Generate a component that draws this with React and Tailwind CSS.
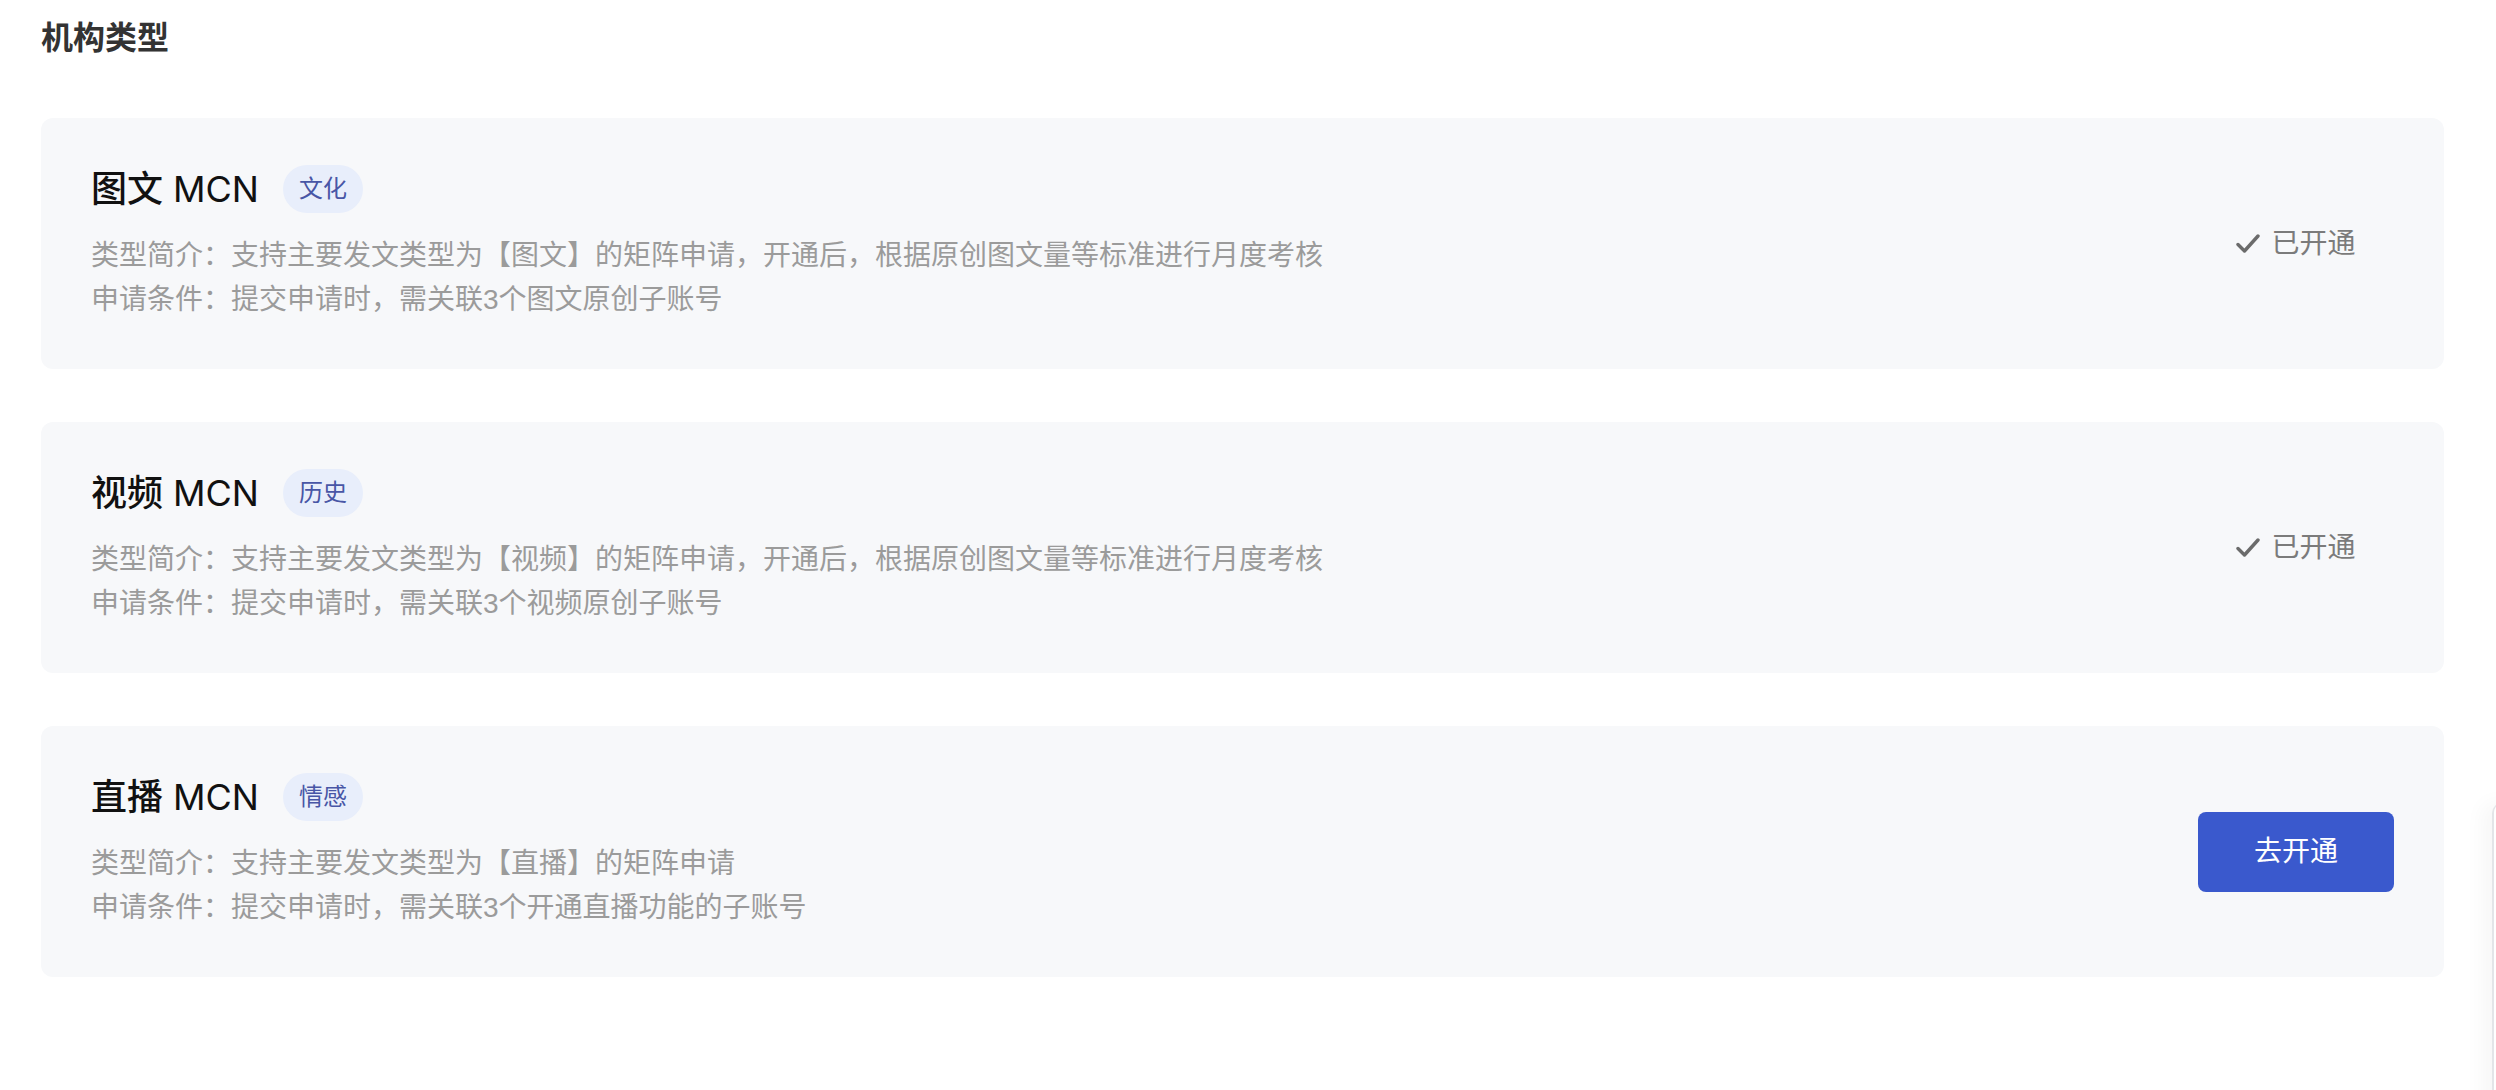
import React from 'react';

const types = [
  {
    id: 'article',
    name: '图文',
    tag: '文化',
    intro: '类型简介：支持主要发文类型为【图文】的矩阵申请，开通后，根据原创图文量等标准进行月度考核',
    cond: '申请条件：提交申请时，需关联3个图文原创子账号',
    opened: true,
  },
  {
    id: 'video',
    name: '视频',
    tag: '历史',
    intro: '类型简介：支持主要发文类型为【视频】的矩阵申请，开通后，根据原创图文量等标准进行月度考核',
    cond: '申请条件：提交申请时，需关联3个视频原创子账号',
    opened: true,
  },
  {
    id: 'live',
    name: '直播',
    tag: '情感',
    intro: '类型简介：支持主要发文类型为【直播】的矩阵申请',
    cond: '申请条件：提交申请时，需关联3个开通直播功能的子账号',
    opened: false,
  },
];

function CheckMark() {
  return (
    <svg className="w-[24px] h-[21px]" viewBox="0 0 24 21" fill="none">
      <path d="M2 11.5L8.5 18L22 3" stroke="#6b6b6b" strokeWidth="3.4" strokeLinecap="round" strokeLinejoin="round" />
    </svg>
  );
}

function TypeCard({ item }) {
  return (
    <div className="h-[251px] rounded-[12px] bg-[#f7f8fa] flex items-center pl-[50px] pr-[50px]">
      <div className="flex-1 flex flex-col">
        <div className="flex items-center h-[48px] gap-[24px]">
          <span className="text-[36px] leading-[48px] font-medium text-[#111]">
            {item.name}
            <span className="ml-[10px] font-['Inter'] font-normal">MCN</span>
          </span>
          <span className="h-[48px] px-[16px] rounded-full bg-[#e8eefb] text-[24px] text-[#4856a6] flex items-center">
            {item.tag}
          </span>
        </div>
        <div className="mt-[21px] text-[28px] leading-[44px] text-[#9b9b9b]">
          <p>{item.intro}</p>
          <p>{item.cond}</p>
        </div>
      </div>
      <div className="w-[196px] flex justify-center">
        {item.opened ? (
          <div className="flex items-center gap-[11px] text-[28px] leading-[40px] text-[#7b7b7b]">
            <CheckMark />
            <span>已开通</span>
          </div>
        ) : (
          <button className="w-[196px] h-[80px] rounded-[8px] bg-[#3a59cd] text-white text-[28px] flex items-center justify-center">
            去开通
          </button>
        )}
      </div>
    </div>
  );
}

export default function App() {
  return (
    <div
      className="relative min-h-[1090px] bg-white overflow-hidden pl-[41px] pr-[52px] pt-[14px]"
      style={{ fontFamily: '"Liberation Sans", "Noto Sans CJK SC", sans-serif' }}
    >
      <h2 className="text-[32px] leading-[48px] font-semibold text-[#333]">机构类型</h2>
      <div className="mt-[56px] flex flex-col gap-[53px]">
        {types.map(item => (
          <TypeCard key={item.id} item={item} />
        ))}
      </div>
      {/* edge of a side panel peeking in at the right */}
      <div className="absolute left-[2492px] top-[803px] w-[40px] h-[400px] bg-white border-l-2 border-[#e3e5e8] rounded-tl-[10px] shadow-[-10px_0_20px_rgba(0,0,0,0.035)]" />
    </div>
  );
}
